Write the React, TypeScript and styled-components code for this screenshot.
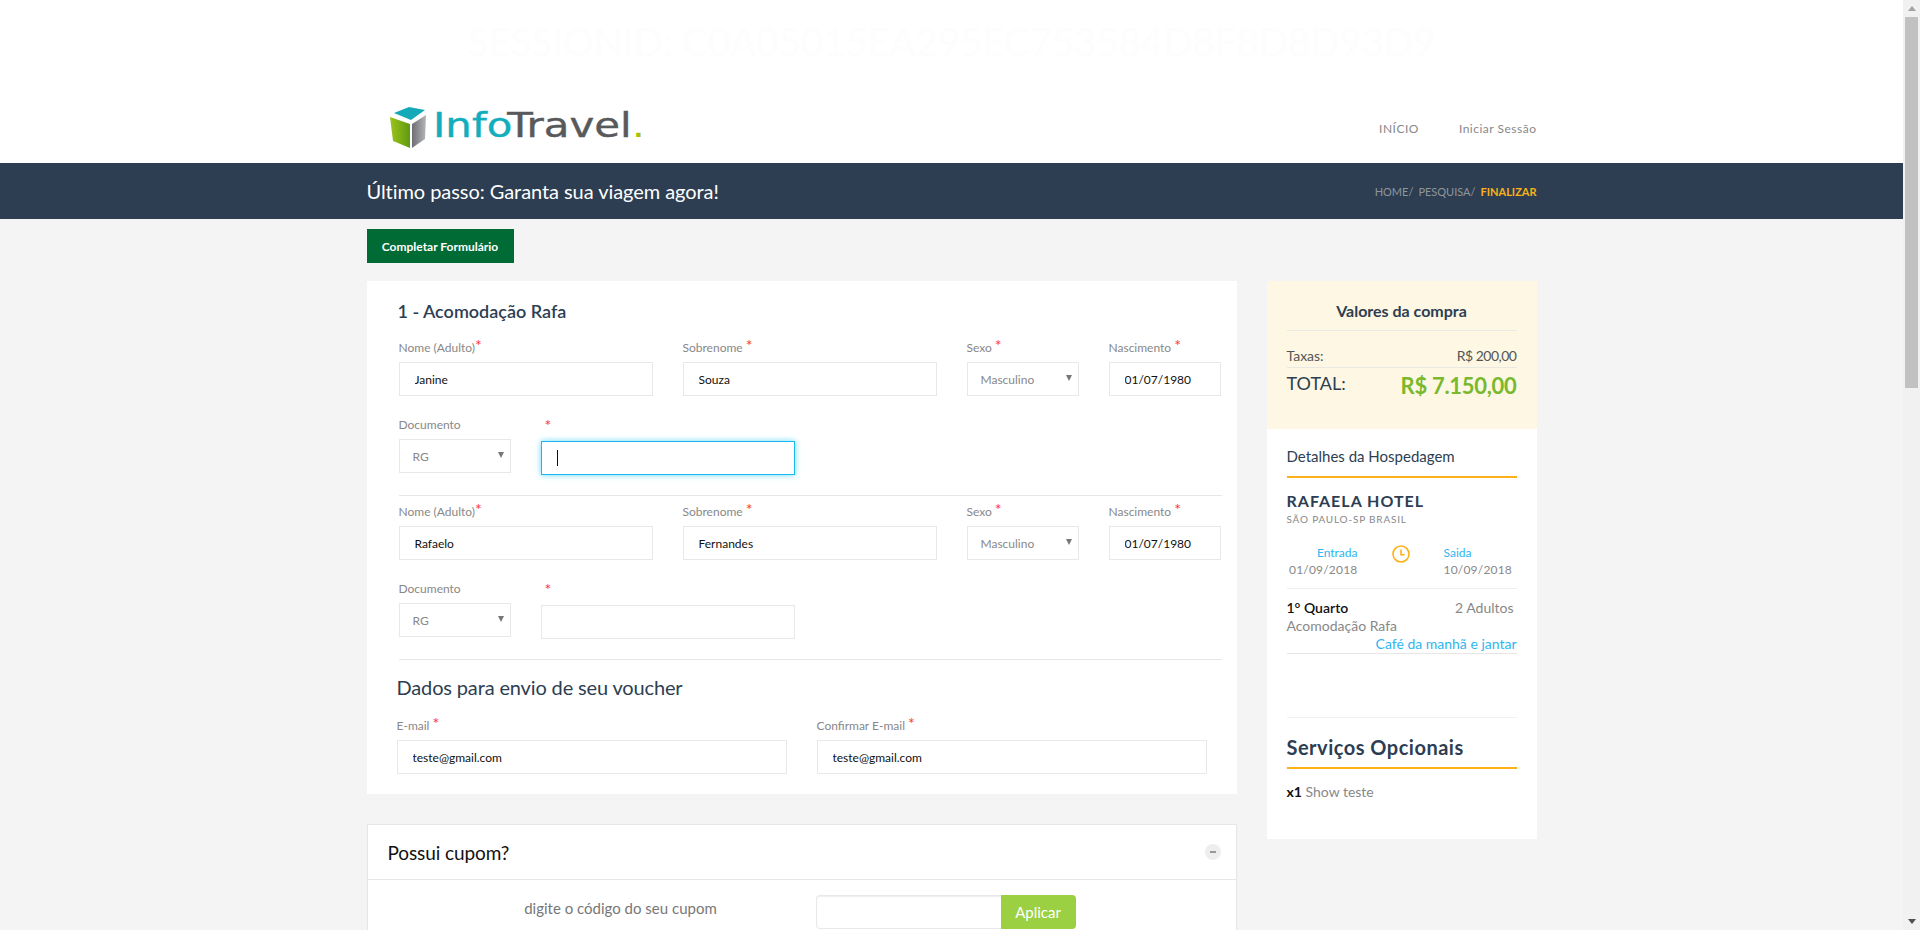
import styled, { createGlobalStyle } from 'styled-components'

const GlobalStyle = createGlobalStyle`
    html, body {
        margin: 0;
        height: 100%;
        overflow: hidden;
        background: #f4f4f4;
    }
    * {
        box-sizing: border-box;
    }
    body {
        font-family: Lato, 'Liberation Sans', sans-serif;
        color: #2d3e52;
    }
`

function Logo() {
    return (
        <LogoSvg width="260" height="46" viewBox="0 0 260 46">
            <defs>
                <linearGradient id="cubeLeft" x1="0" x2="1" y1="0" y2="0">
                    <stop offset="0" stopColor="#9cc41c" />
                    <stop offset="1" stopColor="#5f9a10" />
                </linearGradient>
                <linearGradient id="cubeRight" x1="0" x2="1" y1="0" y2="0">
                    <stop offset="0" stopColor="#6d6f72" />
                    <stop offset="1" stopColor="#b4b6b8" />
                </linearGradient>
            </defs>
            <path d="M1 13 L21 20 L21 44 L4 37 Z" fill="url(#cubeLeft)" />
            <path d="M23 20 L37 11 L36 35 L23 44 Z" fill="url(#cubeRight)" />
            <path d="M5 9 L20 3 L36 6 L22 16 Z" fill="#16a9b8" />
            <text x="44" y="33" fontFamily="'DejaVu Sans', sans-serif" fontSize="33" textLength="212" lengthAdjust="spacingAndGlyphs">
                <tspan fill="#12aebd" stroke="#12aebd" strokeWidth="0.4">Info</tspan>
                <tspan dx="-4" fill="#58595b" stroke="#58595b" strokeWidth="0.4">Travel</tspan>
                <tspan fill="#a4c400">.</tspan>
            </text>
        </LogoSvg>
    )
}

function Req({ low }: { low?: boolean }) {
    return <Star $low={low}>*</Star>
}

function PersonBlock({ name, surname, focused }: { name: string; surname: string; focused?: boolean }) {
    return (
        <Person>
            <PersonRow>
                <Field>
                    <Label>Nome (Adulto)<Req /></Label>
                    <Input readOnly value={name} />
                </Field>
                <Field>
                    <Label>Sobrenome <Req /></Label>
                    <Input readOnly value={surname} />
                </Field>
                <Field>
                    <Label>Sexo <Req /></Label>
                    <SelectBox>Masculino<Arrow /></SelectBox>
                </Field>
                <Field>
                    <Label>Nascimento <Req /></Label>
                    <Input readOnly value="01/07/1980" />
                </Field>
            </PersonRow>
            <DocumentRow>
                <Field>
                    <Label>Documento</Label>
                    <SelectBox>RG<Arrow /></SelectBox>
                </Field>
                <Field>
                    <Label><Req low /></Label>
                    <InputWrap>
                        <Input readOnly value="" $focused={focused} />
                        {focused && <Caret />}
                    </InputWrap>
                </Field>
            </DocumentRow>
        </Person>
    )
}

export default function App() {
    return (
        <>
            <GlobalStyle />
            <Screen>
                <Page>
                    <Header>
                        <Session>SESSIONID: C0A05015EA295EC753584D8F8D8D93D9</Session>
                        <HeaderRow>
                            <Logo />
                            <Nav>
                                <NavLink>INÍCIO</NavLink>
                                <NavLink>Iniciar Sessão</NavLink>
                            </Nav>
                        </HeaderRow>
                    </Header>
                    <Band>
                        <BandInner>
                            <BandTitle>Último passo: Garanta sua viagem agora!</BandTitle>
                            <Breadcrumb>
                                <Crumb>HOME/</Crumb>
                                <Crumb>PESQUISA/</Crumb>
                                <Crumb $active>FINALIZAR</Crumb>
                            </Breadcrumb>
                        </BandInner>
                    </Band>
                    <Container>
                        <CompleteButton>Completar Formulário</CompleteButton>
                        <Columns>
                            <Main>
                                <FormCard>
                                    <RoomTitle>1 - Acomodação Rafa</RoomTitle>
                                    <PersonBlock name="Janine" surname="Souza" focused />
                                    <PersonBlock name="Rafaelo" surname="Fernandes" />
                                    <VoucherTitle>Dados para envio de seu voucher</VoucherTitle>
                                    <EmailRow>
                                        <Field>
                                            <Label>E-mail <Req /></Label>
                                            <Input readOnly value="teste@gmail.com" />
                                        </Field>
                                        <Field>
                                            <Label>Confirmar E-mail <Req /></Label>
                                            <Input readOnly value="teste@gmail.com" />
                                        </Field>
                                    </EmailRow>
                                </FormCard>
                                <CouponCard>
                                    <CouponHead>
                                        <CouponTitle>Possui cupom?</CouponTitle>
                                        <Collapse />
                                    </CouponHead>
                                    <CouponBody>
                                        <CouponHint>digite o código do seu cupom</CouponHint>
                                        <CouponForm>
                                            <CouponInput readOnly value="" />
                                            <ApplyButton>Aplicar</ApplyButton>
                                        </CouponForm>
                                    </CouponBody>
                                </CouponCard>
                            </Main>
                            <Side>
                                <Summary>
                                    <SummaryTitle>Valores da compra</SummaryTitle>
                                    <FeeRow>
                                        <span>Taxas:</span>
                                        <span>R$ 200,00</span>
                                    </FeeRow>
                                    <TotalRow>
                                        <span>TOTAL:</span>
                                        <TotalValue>R$ 7.150,00</TotalValue>
                                    </TotalRow>
                                </Summary>
                                <Details>
                                    <DetailsTitle>Detalhes da Hospedagem</DetailsTitle>
                                    <HotelName>RAFAELA HOTEL</HotelName>
                                    <HotelPlace>SÃO PAULO-SP BRASIL</HotelPlace>
                                    <Dates>
                                        <DateCol $right>
                                            <DateLabel>Entrada</DateLabel>
                                            <DateValue>01/09/2018</DateValue>
                                        </DateCol>
                                        <svg width="18" height="18" viewBox="0 0 18 18" fill="none" stroke="#fbb117" strokeWidth="1.6">
                                            <circle cx="9" cy="9" r="8" />
                                            <path d="M9 4.5 V9.7 H12.6" />
                                        </svg>
                                        <DateCol>
                                            <DateLabel>Saida</DateLabel>
                                            <DateValue>10/09/2018</DateValue>
                                        </DateCol>
                                    </Dates>
                                    <Room>
                                        <RoomLine>
                                            <RoomName>1° Quarto</RoomName>
                                            <RoomGuests>2 Adultos</RoomGuests>
                                        </RoomLine>
                                        <RoomText>Acomodação Rafa</RoomText>
                                        <RoomMeal>Café da manhã e jantar</RoomMeal>
                                    </Room>
                                    <ServicesTitle>Serviços Opcionais</ServicesTitle>
                                    <ServiceLine><b>x1</b> Show teste</ServiceLine>
                                </Details>
                            </Side>
                        </Columns>
                    </Container>
                </Page>
                <ScrollBar>
                    <ScrollArrow />
                    <ScrollThumb />
                    <ScrollArrow $down />
                </ScrollBar>
            </Screen>
        </>
    )
}

const Screen = styled.div`
    display: flex;
    height: 930px;
    overflow: hidden;
`

const Page = styled.div`
    flex: 1;
    min-width: 0;
`

const Header = styled.header`
    background: #fff;
    height: 163px;
    display: flex;
    flex-direction: column;
    align-items: center;
`

const Session = styled.div`
    font-size: 38.4px;
    line-height: 56px;
    height: 104px;
    padding-top: 13px;
    color: #fdfdfd;
    white-space: nowrap;
`

const HeaderRow = styled.div`
    width: 1170px;
    display: flex;
    justify-content: space-between;
    padding-left: 22px;
`

const LogoSvg = styled.svg`
    display: block;
`

const Nav = styled.nav`
    display: flex;
    gap: 40px;
    padding-top: 17px;
`

const NavLink = styled.a`
    font-size: 12px;
    line-height: 16px;
    color: #888;
    letter-spacing: 0.5px;
`

const Band = styled.div`
    background: #2d3e52;
    height: 56px;
`

const BandInner = styled.div`
    width: 1170px;
    height: 100%;
    margin: 0 auto;
    display: flex;
    align-items: center;
    justify-content: space-between;
`

const BandTitle = styled.h1`
    margin: 0;
    font-size: 20px;
    font-weight: 400;
    letter-spacing: -0.06px;
    color: #fff;
`

const Breadcrumb = styled.div`
    display: flex;
    gap: 5px;
`

const Crumb = styled.span<{ $active?: boolean }>`
    font-size: 11px;
    font-weight: ${({ $active }) => ($active ? 700 : 400)};
    color: ${({ $active }) => ($active ? '#fbb117' : '#8f959c')};
`

const Container = styled.div`
    width: 1170px;
    margin: 0 auto;
    padding-top: 10px;
`

const CompleteButton = styled.button`
    display: block;
    width: 147px;
    height: 34px;
    padding: 0;
    border: none;
    background: #006b35;
    color: #fff;
    font-family: inherit;
    font-size: 12px;
    font-weight: 700;
`

const Columns = styled.div`
    display: flex;
    justify-content: space-between;
    margin-top: 18px;
`

const Main = styled.main`
    width: 870px;
`

const FormCard = styled.section`
    background: #fff;
    padding: 15px 15px 20px 32px;
`

const RoomTitle = styled.h2`
    margin: 0 0 12px -1px;
    font-size: 18px;
    line-height: 30px;
    font-weight: 600;
    color: #2d3e52;
`

const Person = styled.div`
    padding-bottom: 20px;
    border-bottom: 1px solid #e6e6e6;
    margin-bottom: 6px;
`

const PersonRow = styled.div`
    display: grid;
    grid-template-columns: 254px 254px 112px 112px;
    column-gap: 30px;
`

const DocumentRow = styled.div`
    display: grid;
    grid-template-columns: 112px 254px;
    column-gap: 30px;
    margin-top: 19px;
`

const Field = styled.div`
    display: flex;
    flex-direction: column;
    min-width: 0;
`

const Label = styled.label`
    height: 20px;
    margin-bottom: 4px;
    font-size: 12px;
    line-height: 20px;
    color: #888;
    white-space: nowrap;
`

const Star = styled.span<{ $low?: boolean }>`
    position: relative;
    top: ${({ $low }) => ($low ? '2px' : '-1px')};
    margin-left: ${({ $low }) => ($low ? '4px' : '0')};
    font-size: 16px;
    line-height: 14px;
    color: #f33;
`

const InputWrap = styled.div`
    position: relative;
    margin-top: 2px;
`

const Input = styled.input<{ $focused?: boolean }>`
    display: block;
    width: 100%;
    height: 34px;
    padding: 0 15px;
    background: #fff;
    border: 1px solid ${({ $focused }) => ($focused ? '#19b9f0' : '#e8e8e8')};
    box-shadow: ${({ $focused }) => ($focused ? '0 0 6px #66d9ff' : 'none')};
    border-radius: 0;
    outline: none;
    font-family: inherit;
    font-size: 12px;
    color: #111;
`

const Caret = styled.span`
    position: absolute;
    left: 16px;
    top: 9px;
    width: 1px;
    height: 16px;
    background: #111;
`

const SelectBox = styled.div`
    position: relative;
    height: 34px;
    padding: 0 13px;
    border: 1px solid #e8e8e8;
    font-size: 12px;
    line-height: 33px;
    color: #888;
`

const Arrow = styled.span`
    position: absolute;
    right: 6px;
    top: 12px;
    border-left: 3px solid transparent;
    border-right: 3px solid transparent;
    border-top: 6px solid #777;
`

const VoucherTitle = styled.h3`
    margin: 13px 0 15px -2px;
    font-size: 20px;
    line-height: 28px;
    font-weight: 400;
    letter-spacing: -0.15px;
    color: #2d3e52;
`

const EmailRow = styled.div`
    display: grid;
    grid-template-columns: 390px 390px;
    column-gap: 30px;
    margin-left: -2px;
`

const CouponCard = styled.section`
    margin-top: 30px;
    background: #fff;
    border: 1px solid #e6e6e6;
`

const CouponHead = styled.div`
    height: 55px;
    padding: 0 15px 0 20px;
    display: flex;
    align-items: center;
    justify-content: space-between;
    border-bottom: 1px solid #e6e6e6;
`

const CouponTitle = styled.h3`
    margin: 0;
    font-size: 19px;
    font-weight: 400;
    letter-spacing: -0.1px;
    color: #111;
`

const Collapse = styled.span`
    width: 16px;
    height: 16px;
    border-radius: 50%;
    background: #eee;
    display: flex;
    align-items: center;
    justify-content: center;

    &::before {
        content: '';
        width: 6px;
        height: 2px;
        background: #999;
    }
`

const CouponBody = styled.div`
    display: grid;
    grid-template-columns: 448px 1fr;
    padding-top: 15px;
    padding-bottom: 20px;
`

const CouponHint = styled.div`
    padding-left: 58px;
    text-align: center;
    font-size: 15px;
    line-height: 26px;
    color: #777;
`

const CouponForm = styled.div`
    display: flex;
    width: 260px;
    height: 34px;
`

const CouponInput = styled.input`
    flex: 1;
    min-width: 0;
    border: 1px solid #e8e8e8;
    border-right: none;
    border-radius: 4px 0 0 4px;
    box-shadow: inset 0 1px 1px rgba(0, 0, 0, 0.07);
    outline: none;
`

const ApplyButton = styled.button`
    width: 75px;
    border: none;
    border-radius: 0 4px 4px 0;
    background: #9bd043;
    color: #fff;
    font-family: inherit;
    font-size: 15px;
`

const Side = styled.aside`
    width: 270px;
    height: 558px;
    background: #fff;
`

const Summary = styled.div`
    height: 148px;
    padding: 19px 20px 0;
    background: #fdf7e3;
`

const SummaryTitle = styled.h3`
    margin: 0;
    padding-bottom: 8px;
    border-bottom: 1px solid #e9e9e3;
    font-size: 16px;
    line-height: 22px;
    font-weight: 700;
    text-align: center;
    color: #2d3e52;
`

const FeeRow = styled.div`
    display: flex;
    justify-content: space-between;
    margin-top: 15px;
    height: 22px;
    border-bottom: 1px solid #e9e9e3;
    font-size: 14px;
    line-height: 20px;
    color: #555;

    span:last-child {
        letter-spacing: -0.5px;
    }
`

const TotalRow = styled.div`
    display: flex;
    justify-content: space-between;
    align-items: flex-start;
    font-size: 18px;
    line-height: 30px;
    color: #2d3e52;
`

const TotalValue = styled.span`
    font-size: 22px;
    line-height: 36px;
    font-weight: 700;
    letter-spacing: -0.3px;
    color: #7ab82e;
`

const Details = styled.div`
    padding: 0 20px;
`

const DetailsTitle = styled.h4`
    margin: 0;
    padding: 15px 0 8px;
    border-bottom: 2px solid #fbb117;
    font-size: 15px;
    line-height: 24px;
    font-weight: 400;
    color: #2d3e52;
`

const HotelName = styled.div`
    margin-top: 13px;
    font-size: 16px;
    line-height: 20px;
    font-weight: 700;
    letter-spacing: 1px;
    color: #2d3e52;
`

const HotelPlace = styled.div`
    font-size: 10px;
    line-height: 16px;
    letter-spacing: 0.8px;
    color: #888;
`

const Dates = styled.div`
    display: grid;
    grid-template-columns: 71px 18px 1fr;
    column-gap: 34px;
    margin-top: 18px;
    padding-bottom: 10px;
    border-bottom: 1px solid #eee;
`

const DateCol = styled.div<{ $right?: boolean }>`
    text-align: ${({ $right }) => ($right ? 'right' : 'left')};
`

const DateLabel = styled.div`
    font-size: 12px;
    line-height: 16px;
    color: #2fb5f0;
`

const DateValue = styled.div`
    font-size: 12px;
    line-height: 17px;
    letter-spacing: 0.2px;
    color: #888;
`

const Room = styled.div`
    padding-top: 10px;
    padding-bottom: 1px;
    border-bottom: 1px solid #e6e6e6;
    font-size: 14px;
    line-height: 18px;
    height: 65px;
`

const RoomLine = styled.div`
    display: flex;
    justify-content: space-between;
    padding-right: 3px;
`

const RoomName = styled.span`
    font-weight: 600;
    color: #111;
`

const RoomGuests = styled.span`
    color: #888;
`

const RoomText = styled.div`
    color: #888;
`

const RoomMeal = styled.div`
    text-align: right;
    color: #2fb5f0;
`

const ServicesTitle = styled.h4`
    margin: 63px 0 0;
    padding: 15px 0 6px;
    border-top: 1px solid #f2f2f2;
    border-bottom: 2px solid #fbb117;
    font-size: 20px;
    line-height: 28px;
    font-weight: 700;
    letter-spacing: 0.5px;
    color: #2d3e52;
`

const ServiceLine = styled.div`
    margin-top: 14px;
    font-size: 14px;
    line-height: 18px;
    color: #888;

    b {
        font-weight: 700;
        color: #111;
    }
`

const ScrollBar = styled.div`
    width: 17px;
    flex-shrink: 0;
    background: #f1f1f1;
    display: flex;
    flex-direction: column;
`

const ScrollArrow = styled.div<{ $down?: boolean }>`
    height: 17px;
    margin-top: ${({ $down }) => ($down ? 'auto' : '0')};
    display: flex;
    align-items: center;
    justify-content: center;

    &::before {
        content: '';
        border-left: 4px solid transparent;
        border-right: 4px solid transparent;
        ${({ $down }) => ($down ? 'border-top: 5px solid #505050' : 'border-bottom: 5px solid #a3a3a3')};
    }
`

const ScrollThumb = styled.div`
    height: 371px;
    margin: 0 2px;
    background: #c1c1c1;
`
